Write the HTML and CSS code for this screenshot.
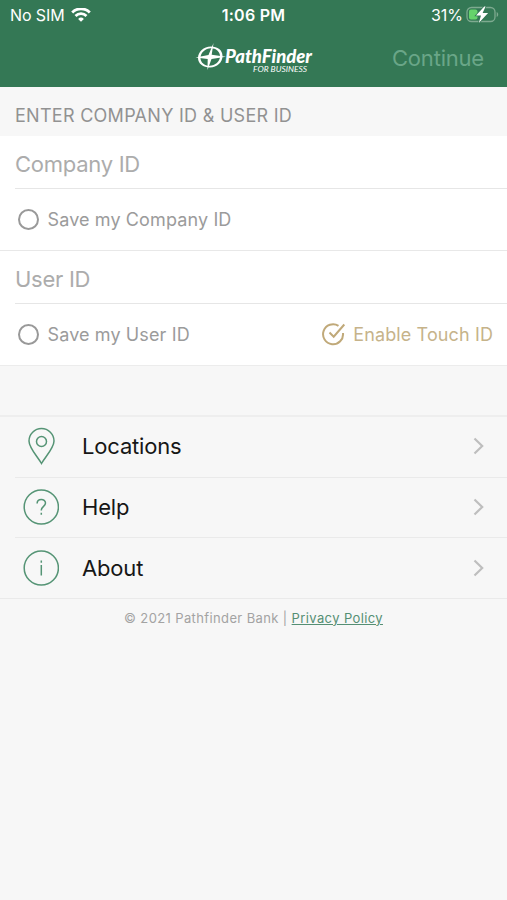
FILE: index.html
```html
<!DOCTYPE html>
<html lang="en">
<head>
<meta charset="utf-8">
<title>PathFinder for Business</title>
<link rel="stylesheet" href="styles.css">
</head>
<body>
<header class="top">
  <div class="status">
    <div class="carrier"><span>No SIM</span>
      <svg width="20" height="15" viewBox="0 0 20 15" fill="none" stroke="#fff" stroke-width="2.8"><path d="M1.2 4.4a12.6 12.6 0 0 1 17.6 0M4.500 7.900a7.900 7.900 0 0 1 11 0"/><path d="M10 13.800 7.100 10.900a4.200 4.200 0 0 1 5.800 0Z" fill="#fff" stroke="none"/></svg>
    </div>
    <div class="clock">1:06 PM</div>
    <div class="power"><span>31%</span>
      <svg width="33" height="18" viewBox="0 0 33 18"><rect x="1" y="1.500" width="28" height="14" rx="4.5" fill="none" stroke="#7eaa90" stroke-width="1.3"/><path d="M30.700 6c2 .8 2 4.200 0 5Z" fill="#7eaa90"/><rect x="3" y="3.500" width="8.5" height="10" rx="2" fill="#65d36b"/><path d="m18.300.5-8.300 9h5l-2.200 7.400 9.300-9.800h-5.500L19.600.5Z" fill="#fff" stroke="#347855" stroke-width="1.5" paint-order="stroke"/></svg>
    </div>
  </div>
  <div class="nav">
    <svg class="logo" width="120" height="34" viewBox="0 0 120 34" fill="#fff">
      <path fill-rule="evenodd" d="M3 16C3 10 8.500 4.500 16 4.500c6.500 0 11.500 3.600 11.500 9.200 0 6.700-5.500 11.700-12.500 11.700-7 0-12-3.700-12-9.400Zm2.500 0c0 4.500 4 7.800 9 7.800 5.700 0 10.500-4.300 10.500-9.500 0-4.700-4-8-9-8-5.700 0-10.500 4.500-10.500 9.700Z"/>
      <path d="m18.500 1-1.800 11.800L31 14.800l-14.500 2.300L12.500 28l.2-10.900L.5 15.600l13-2.700Z"/>
      <text class="brand" x="30" y="21" textLength="87" lengthAdjust="spacingAndGlyphs">PathFinder</text>
      <text class="tagline" x="58" y="30" textLength="54" lengthAdjust="spacingAndGlyphs">FOR BUSINESS</text>
    </svg>
    <div class="continue">Continue</div>
  </div>
</header>
<main>
  <h1 class="heading">ENTER COMPANY ID &amp; USER ID</h1>
  <section class="form">
    <div class="field"><span>Company ID</span></div>
    <div class="save"><i class="radio"></i><span>Save my Company ID</span></div>
    <div class="field user"><span>User ID</span></div>
    <div class="save"><i class="radio"></i><span>Save my User ID</span>
      <div class="touch"><svg width="24" height="24" viewBox="0 0 24 24" fill="none" stroke="#c0a979" stroke-width="2"><path d="M16.500 2.800A10 10 0 1 0 21 10M7.500 9.500l4.200 4.200L22.300 1.500"/></svg><span>Enable Touch ID</span></div>
    </div>
  </section>
  <nav class="menu">
    <div class="item"><svg class="icon" width="36" height="38" viewBox="0 0 36 38"><path d="M18.500 36.500C14.500 29.500 6 21 6 14a12.500 12.500 0 0 1 25 0c0 7-8.500 15.500-12.500 22.500Z"/><circle cx="18.500" cy="14.500" r="5"/></svg><span>Locations</span><svg class="chevron" width="11" height="18" viewBox="0 0 11 18"><path d="m1.500 1.500 7.700 7.500-7.700 7.500"/></svg></div>
    <div class="item"><svg class="icon" width="36" height="38" viewBox="0 0 36 38"><circle cx="18.300" cy="19" r="17.100"/><path d="M14.100 15.500c0-5.500 8.400-5.300 8.400-.4 0 3.400-4.200 3.300-4.200 7.400M18.300 24.700v2"/></svg><span>Help</span><svg class="chevron" width="11" height="18" viewBox="0 0 11 18"><path d="m1.500 1.500 7.700 7.500-7.700 7.500"/></svg></div>
    <div class="item"><svg class="icon" width="36" height="38" viewBox="0 0 36 38"><circle cx="18.300" cy="19" r="17.100"/><path d="M18.300 16v10.500M18.300 11.500v2.200"/></svg><span>About</span><svg class="chevron" width="11" height="18" viewBox="0 0 11 18"><path d="m1.500 1.500 7.700 7.500-7.700 7.500"/></svg></div>
  </nav>
</main>
<footer class="footer"><span>© 2021 Pathfinder Bank | <a>Privacy Policy</a></span></footer>
</body>
</html>
```
FILE: styles.css
```css
* { box-sizing: border-box; }
body { margin: 0; min-height: 900px; background: #f7f7f7; font-family: Inter, "Liberation Sans", sans-serif; color: #161616; }
svg { display: block; flex: none; }
.top { height: 87px; background: #347855; color: #fff; }
.status { height: 30px; display: grid; grid-template-columns: 1fr auto 1fr; align-items: center; padding: 0 8px 0 10px; font-size: 16px; }
.carrier, .power { display: flex; align-items: center; gap: 6px; }
.carrier span { letter-spacing: -.1px; }
.power { justify-content: flex-end; gap: 3px; }
.clock { font-weight: 600; letter-spacing: .25px; margin-right: 2px; }
.nav { height: 57px; display: grid; grid-template-columns: 1fr 120px 1fr; align-items: center; padding: 0 23px 0 25px; }
.logo { grid-column: 2; overflow: visible; }
.brand { font: italic 900 18px Lato, sans-serif; }
.tagline { font: italic 400 8.3px Lato, sans-serif; }
.continue { justify-self: end; margin-top: -2px; font-size: 22px; letter-spacing: -.2px; color: #6aa688; }
.heading { margin: 0; height: 49px; padding: 7px 15px 0; display: flex; align-items: center; font-size: 18px; font-weight: 400; letter-spacing: .28px; color: #929292; }
.form { background: #fff; border-bottom: 1px solid #ececec; }
.field { height: 53px; margin-left: 15px; padding-top: 4px; display: flex; align-items: center; border-bottom: 1px solid #e6e6e6; font-size: 22px; letter-spacing: -.27px; color: #acacac; }
.save { height: 61px; padding: 0 14px 0 18px; display: flex; align-items: center; font-size: 18px; letter-spacing: .12px; color: #9b9b9b; }
.user { position: relative; height: 54px; }
.user::before { content: ""; position: absolute; top: 0; left: -15px; right: 0; height: 1px; background: #e8e8e8; }
.radio { width: 21px; height: 21px; border: 2px solid #999; border-radius: 50%; margin-right: 8.500px; }
.touch { margin-left: auto; display: flex; align-items: center; gap: 7px; color: #c6b38a; }
.menu { margin-top: 49px; border-top: 2px solid #eee; border-bottom: 1px solid #eaeaea; }
.item { height: 60.500px; margin-left: 15px; padding: 0 23px 1px 8px; display: flex; align-items: center; font-size: 22px; letter-spacing: -.17px; }
.item:first-child { height: 59.500px; }
.item:last-child { padding-bottom: 0; }
.item + .item { border-top: 1px solid #eaeaea; }
.icon { margin-right: 23px; fill: none; stroke: #559475; stroke-width: 1.5; }
.chevron { margin-left: auto; fill: none; stroke: #bebebe; stroke-width: 2.2; }
.footer { display: flex; justify-content: center; padding-top: 11px; font-size: 13px; color: #a3a3a3; letter-spacing: .38px; }
.footer a { color: #558f74; text-decoration: underline; }
```
